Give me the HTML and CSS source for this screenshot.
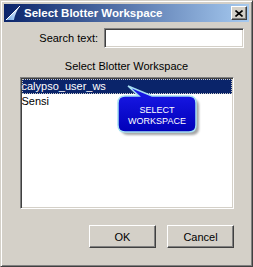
FILE: index.html
```html
<!DOCTYPE html>
<html lang="en">
<head>
  <meta charset="UTF-8">
  <title>Select Blotter Workspace</title>
  <link rel="stylesheet" href="styles.css">
</head>
<body>
  <div class="window">
    <!-- Titelleiste -->
    <div class="titlebar">
      <svg class="app-icon" width="16" height="16" viewBox="0 0 16 16">
        <defs>
          <linearGradient id="sail" x1="0" y1="1" x2="1" y2="0">
            <stop offset="0" stop-color="#6fa8e8"></stop>
            <stop offset="1" stop-color="#ffffff"></stop>
          </linearGradient>
        </defs>
        <path d="M1 15 L15 1 Q10 8 9 15 Z" fill="url(#sail)"></path>
        <path d="M1 15 L15 1" stroke="#ffffff" stroke-width="1"></path>
      </svg>
      <span class="title">Select Blotter Workspace</span>
      <button class="close-btn" aria-label="Close">
        <svg width="8" height="7" viewBox="0 0 8 7">
          <path d="M0.5 0.5 L7.5 6.5 M7.5 0.5 L0.5 6.5" stroke="#000" stroke-width="1.6"></path>
        </svg>
      </button>
    </div>

    <div class="content">
      <div class="search-row">
        <label for="search">Search text:</label>
        <input id="search" type="text">
      </div>

      <div class="list-caption">Select Blotter Workspace</div>

      <div class="list">
        <div class="list-item selected">calypso_user_ws</div>
        <div class="list-item">Sensi</div>

        <!-- Sprechblase -->
        <svg class="callout" width="86" height="56" viewBox="0 0 86 56">
          <defs>
            <linearGradient id="bubble" x1="0" y1="0" x2="0" y2="1">
              <stop offset="0" stop-color="#1c1cec"></stop>
              <stop offset="1" stop-color="#0000b8"></stop>
            </linearGradient>
            <filter id="soft" x="-10%" y="-10%" width="130%" height="130%">
              <feGaussianBlur stdDeviation="1"></feGaussianBlur>
            </filter>
          </defs>
          <path transform="translate(3,3)" filter="url(#soft)" fill="#a4a4a4"
                d="M10 13 L24 13 L13 3 L37 13 L74 13 Q81 13 81 20 L81 42 Q81 49 74 49 L10 49 Q3 49 3 42 L3 20 Q3 13 10 13 Z"></path>
          <path fill="url(#bubble)" stroke="#a6dff2" stroke-width="1.5"
                d="M10 13 L24 13 L13 3 L37 13 L74 13 Q81 13 81 20 L81 42 Q81 49 74 49 L10 49 Q3 49 3 42 L3 20 Q3 13 10 13 Z"></path>
          <text x="42" y="30" class="callout-text">SELECT</text>
          <text x="42" y="41" class="callout-text">WORKSPACE</text>
        </svg>
      </div>

      <div class="buttons">
        <button class="btn">OK</button>
        <button class="btn">Cancel</button>
      </div>
    </div>
  </div>
</body>
</html>
```

FILE: styles.css
```css
/* Grundlayout */
* {
  box-sizing: border-box;
}
body {
  margin: 0;
  font-family: "Liberation Sans", Arial, sans-serif;
  font-size: 11px;
  color: #000;
  background: #d4d0c8;
}

/* Fensterrahmen */
.window {
  width: 253px;
  height: 267px;
  border: 1px solid;
  border-color: #d4d0c8 #404040 #404040 #d4d0c8;
  box-shadow: inset 1px 1px #ffffff, inset -1px -1px #808080;
  padding: 3px;
  background: #d4d0c8;
  display: flex;
  flex-direction: column;
}

/* Titelleiste */
.titlebar {
  height: 18px;
  display: flex;
  align-items: center;
  padding: 0 2px 0 1px;
  background: linear-gradient(to right, #0a246a, #a6caf0);
  color: #fff;
}
.app-icon {
  flex: none;
}
.title {
  flex: 1;
  margin-left: 3px;
  font-weight: bold;
  font-size: 11.5px;
  white-space: nowrap;
}
.close-btn {
  width: 16px;
  height: 14px;
  padding: 0;
  margin: 0;
  display: flex;
  align-items: center;
  justify-content: center;
  background: #d4d0c8;
  border: 1px solid;
  border-color: #ffffff #404040 #404040 #ffffff;
  box-shadow: inset -1px -1px #808080;
}

/* Inhalt */
.content {
  flex: 1;
  display: flex;
  flex-direction: column;
  padding: 6px 5px 0;
}
.search-row {
  display: flex;
  justify-content: flex-end;
  align-items: center;
  gap: 6px;
}
.search-row input {
  width: 140px;
  height: 20px;
  margin: 0;
  padding: 0 3px;
  font: inherit;
  background: #fff;
  border: 1px solid;
  border-color: #808080 #ffffff #ffffff #808080;
  box-shadow: inset 1px 1px #404040, inset -1px -1px #d4d0c8;
  outline: none;
}
.list-caption {
  margin-top: 12px;
  line-height: 13px;
  text-align: center;
}

/* Liste */
.list {
  position: relative;
  width: 214px;
  height: 132px;
  margin: 4px auto 0;
  padding-top: 1px;
  background: #fff;
  border: 1px solid;
  border-color: #808080 #ffffff #ffffff #808080;
  box-shadow: inset 1px 1px #404040, inset -1px -1px #d4d0c8;
}
.list-item {
  height: 15px;
  line-height: 15px;
  margin: 0 1px;
  padding: 0 1px 0 0;
  white-space: nowrap;
}
.list-item.selected {
  background: #0a246a;
  color: #fff;
  outline: 1px dotted #c8c8c8;
  outline-offset: -1px;
}

/* Sprechblase */
.callout {
  position: absolute;
  left: 94px;
  top: 5px;
}
.callout-text {
  fill: #ffffff;
  font-family: "Liberation Sans", Arial, sans-serif;
  font-size: 9px;
  text-anchor: middle;
}

/* Knöpfe */
.buttons {
  display: flex;
  justify-content: flex-end;
  gap: 11px;
  margin-top: 16px;
  padding-right: 10px;
}
.btn {
  width: 67px;
  height: 23px;
  margin: 0;
  padding: 0;
  font: inherit;
  color: #000;
  background: #d4d0c8;
  border: 1px solid;
  border-color: #ffffff #404040 #404040 #ffffff;
  box-shadow: inset -1px -1px #808080, inset 1px 1px #d4d0c8;
}
```
